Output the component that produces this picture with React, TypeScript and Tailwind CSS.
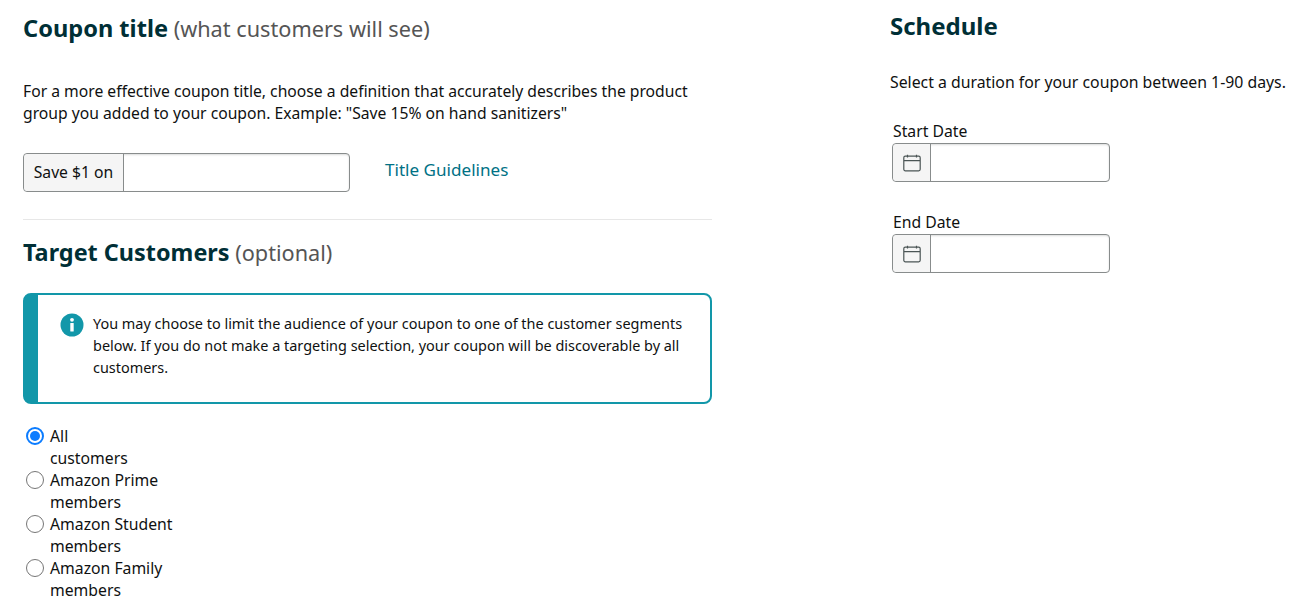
import type { ReactNode } from "react";

function CalendarIcon() {
  return (
    <svg width="18" height="18" viewBox="0 0 18 18" fill="none" stroke="#4b5555" strokeWidth="1.2">
      <rect x="0.8" y="2.2" width="16.4" height="14.6" rx="1.5" />
      <path d="M1 6.6h16M4.5 0.8v2.6M13.5 0.8v2.6" />
    </svg>
  );
}

function DateField({ label, className }: { label: string; className?: string }) {
  return (
    <div className={className}>
      <label className="ml-[3px] block text-[15.75px] leading-[23px] text-[#0f1111]">{label}</label>
      <div className="ml-[2px] flex h-[39px] w-[218px] rounded-[4px] border border-[#888c8c] bg-white shadow-[inset_0_1px_2px_rgba(15,17,17,0.15)]">
        <span className="flex w-[38px] items-center justify-center rounded-l-[4px] border-r border-[#888c8c] bg-[#f5f5f5]">
          <CalendarIcon />
        </span>
      </div>
    </div>
  );
}

function Radio({ checked, children }: { checked?: boolean; children: ReactNode }) {
  return (
    <label className="flex w-[160px] items-start">
      <span
        className={
          checked
            ? "mt-[2px] flex h-[18px] w-[18px] shrink-0 items-center justify-center rounded-full border-2 border-[#0b7cff] bg-white"
            : "mt-[2px] h-[18px] w-[18px] shrink-0 rounded-full border border-[#767676] bg-white"
        }
      >
        {checked && <span className="h-[10px] w-[10px] rounded-full bg-[#0b7cff]" />}
      </span>
      <span className="ml-[6px] w-[130px] text-[15.75px] leading-[22px] text-[#0f1111]">{children}</span>
    </label>
  );
}

export default function App() {
  return (
    <div className="flex h-[614px] overflow-hidden bg-white font-['Noto_Sans',sans-serif] text-[15.7px] text-[#0f1111]">
      <div className="ml-[23px] w-[689px] pt-[12px]">
        <h2 className="text-[21.7px] leading-[32px] text-[#555]">
          <span className="text-[23.6px] font-bold text-[#002f36]">Coupon title</span> (what customers will see)
        </h2>
        <p className="mt-[35px] w-[680px] leading-[22px]">
          For a more effective coupon title, choose a definition that accurately describes the product group you added
          to your coupon. Example: "Save 15% on hand sanitizers"
        </p>
        <div className="mt-[29px] flex items-start">
          <div className="flex h-[39px] w-[327px] rounded-[4px] border border-[#888c8c] bg-white shadow-[inset_0_1px_2px_rgba(15,17,17,0.15)]">
            <span className="flex w-[100px] items-center justify-center rounded-l-[4px] border-r border-[#888c8c] bg-[#f5f5f5] pb-[2px] leading-[22px]">
              Save $1 on
            </span>
          </div>
          <a className="ml-[35px] text-[17.1px] leading-[34px] text-[#007185]">Title Guidelines</a>
        </div>
        <hr className="mt-[27px] border-[#e7e7e7]" />
        <h2 className="mt-[16px] text-[21.7px] leading-[32px] text-[#555]">
          <span className="text-[23.4px] font-bold text-[#002f36]">Target Customers</span> (optional)
        </h2>
        <div className="mt-[24px] flex h-[111px] rounded-[8px] border-2 border-l-[15px] border-[#1297a9] bg-white">
          <div className="flex pl-[22px] pt-[18px]">
            <svg width="24" height="24" viewBox="0 0 24 24" className="shrink-0">
              <circle cx="12" cy="12" r="11.5" fill="#1297a9" />
              <circle cx="12" cy="6.8" r="1.9" fill="#fff" />
              <rect x="10.3" y="10" width="3.4" height="8.6" rx="0.6" fill="#fff" />
            </svg>
            <p className="ml-[9px] w-[600px] text-[14.45px] leading-[22px]">
              You may choose to limit the audience of your coupon to one of the customer segments below. If you do not
              make a targeting selection, your coupon will be discoverable by all customers.
            </p>
          </div>
        </div>
        <div className="ml-[3px] mt-[21px] flex flex-col">
          <Radio checked>
            All
            <br />
            customers
          </Radio>
          <Radio>Amazon Prime members</Radio>
          <Radio>Amazon Student members</Radio>
          <Radio>Amazon Family members</Radio>
        </div>
      </div>
      <div className="ml-[178px] w-[400px] pt-[10px]">
        <h2 className="text-[24px] font-bold leading-[32px] text-[#002f36]">Schedule</h2>
        <p className="mt-[29px] whitespace-nowrap text-[15.82px] leading-[22px]">
          Select a duration for your coupon between 1-90 days.
        </p>
        <DateField label="Start Date" className="mt-[27px]" />
        <DateField label="End Date" className="mt-[29px]" />
      </div>
    </div>
  );
}
